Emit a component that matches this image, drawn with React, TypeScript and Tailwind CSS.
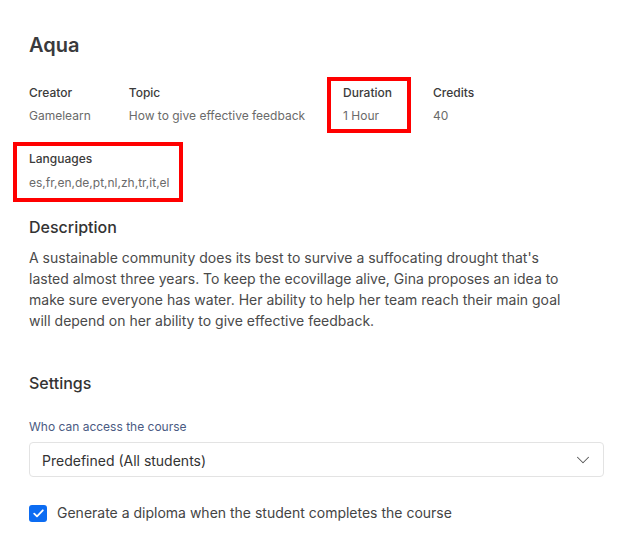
import { ChevronDown } from "lucide-react"

type Field = {
  label: string
  value: string
  highlighted?: boolean
}

const firstRow: Field[] = [
  { label: "Creator", value: "Gamelearn" },
  { label: "Topic", value: "How to give effective feedback" },
  { label: "Duration", value: "1 Hour", highlighted: true },
  { label: "Credits", value: "40" },
]

const FieldBox = ({ field, tall }: { field: Field; tall?: boolean }) => (
  <div
    className={`flex flex-col border-4 pl-3 ${tall ? "pt-[5px] pb-[7px] pr-[9px]" : "pt-[4px] pb-[5px]"} ${
      field.highlighted ? "border-[#ff0000]" : "border-transparent"
    } ${!tall && field.highlighted ? "pr-[15px]" : ""} ${!tall && !field.highlighted ? "pr-3" : ""}`}
  >
    <span className="text-[12px] leading-4 font-medium text-[#3b3b3b]">{field.label}</span>
    <span className={`${tall ? "mt-2" : "mt-[7px]"} text-[12px] leading-4 text-[#6a6a6a]`}>{field.value}</span>
  </div>
)

export default function App() {
  return (
    <div className="min-h-screen bg-white pl-[29px] pr-[31px] pt-[31px] font-['Inter','Noto_Sans',sans-serif]">
      <h1 className="text-[20px] leading-7 font-semibold text-[#3a3a3c]">Aqua</h1>

      <div className="-ml-4 mt-[18px] flex gap-[6px]">
        {firstRow.map((f) => (
          <FieldBox key={f.label} field={f} />
        ))}
      </div>

      <div className="-ml-4 mt-[9px] flex">
        <FieldBox tall field={{ label: "Languages", value: "es,fr,en,de,pt,nl,zh,tr,it,el", highlighted: true }} />
      </div>

      <h2 className="mt-[13px] text-[16px] leading-6 font-medium text-[#333]">Description</h2>
      <p className="mt-[8px] max-w-[540px] text-[14px] leading-[21px] text-[#4a4a4a]">
        A sustainable community does its best to survive a suffocating drought that's lasted almost three years. To
        keep the ecovillage alive, Gina proposes an idea to make sure everyone has water. Her ability to help her team
        reach their main goal will depend on her ability to give effective feedback.
      </p>

      <h2 className="mt-[40px] text-[16px] leading-6 font-medium text-[#333]">Settings</h2>

      <label className="mt-6 block text-[12px] leading-4 text-[#4a5a82]">Who can access the course</label>
      <button
        type="button"
        className="mt-[7px] flex h-[35px] w-full items-center justify-between rounded border border-[#e3e3e3] bg-white pl-3 pr-[9px] text-left"
      >
        <span className="pt-[2px] text-[14px] leading-5 text-[#333]">Predefined (All students)</span>
        <ChevronDown size={22} strokeWidth={1.1} className="text-[#555]" />
      </button>

      <label className="mt-[26px] flex items-center gap-[10px]">
        <span className="flex h-[17px] w-[18px] items-center justify-center rounded-[3px] bg-[#0c6cf2]">
          <svg width="11" height="9" viewBox="0 0 11 9" fill="none">
            <path d="M1.2 4.6 L4 7.3 L9.8 1.3" stroke="white" strokeWidth="1.8" strokeLinecap="round" strokeLinejoin="round" />
          </svg>
        </span>
        <span className="text-[14px] leading-5 text-[#444]">Generate a diploma when the student completes the course</span>
      </label>
    </div>
  )
}
